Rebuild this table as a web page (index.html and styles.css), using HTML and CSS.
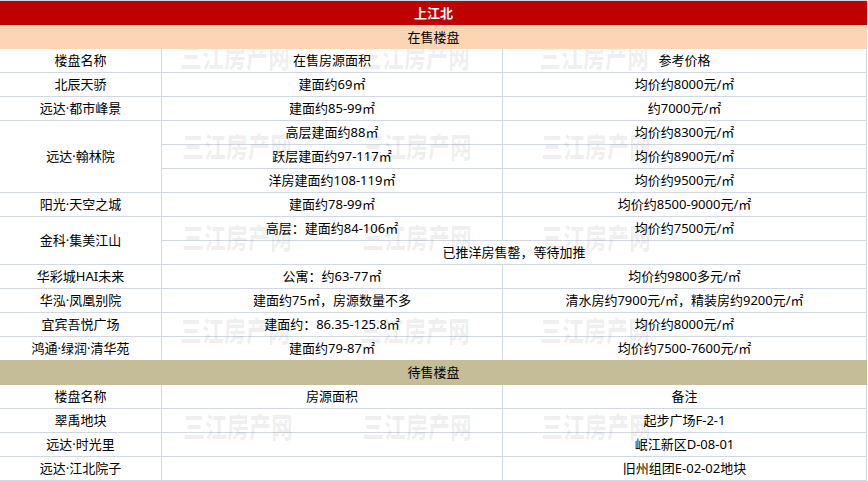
FILE: index.html
```html
<!DOCTYPE html>
<html lang="zh-CN">
<head>
<meta charset="utf-8">
<title>上江北</title>
<link rel="stylesheet" href="styles.css">
</head>
<body>
<div class="sheet">
  <div class="grid">
    <div class="cell band title">上江北</div>
    <div class="cell band onsale">在售楼盘</div>

    <div class="cell">楼盘名称</div><div class="cell">在售房源面积</div><div class="cell">参考价格</div>
    <div class="cell">北辰天骄</div><div class="cell">建面约69㎡</div><div class="cell">均价约8000元/㎡</div>
    <div class="cell">远达·都市峰景</div><div class="cell">建面约85-99㎡</div><div class="cell">约7000元/㎡</div>
    <div class="cell rows3">远达·翰林院</div><div class="cell">高层建面约88㎡</div><div class="cell">均价约8300元/㎡</div>
    <div class="cell">跃层建面约97-117㎡</div><div class="cell">均价约8900元/㎡</div>
    <div class="cell">洋房建面约108-119㎡</div><div class="cell">均价约9500元/㎡</div>
    <div class="cell">阳光·天空之城</div><div class="cell">建面约78-99㎡</div><div class="cell">均价约8500-9000元/㎡</div>
    <div class="cell rows2">金科·集美江山</div><div class="cell">高层：建面约84-106㎡</div><div class="cell">均价约7500元/㎡</div>
    <div class="cell cols2">已推洋房售罄，等待加推</div>
    <div class="cell">华彩城HAI未来</div><div class="cell">公寓：约63-77㎡</div><div class="cell">均价约9800多元/㎡</div>
    <div class="cell">华泓·凤凰别院</div><div class="cell">建面约75㎡，房源数量不多</div><div class="cell">清水房约7900元/㎡，精装房约9200元/㎡</div>
    <div class="cell">宜宾吾悦广场</div><div class="cell">建面约：86.35-125.8㎡</div><div class="cell">均价约8000元/㎡</div>
    <div class="cell">鸿通·绿润·清华苑</div><div class="cell">建面约79-87㎡</div><div class="cell">均价约7500-7600元/㎡</div>

    <div class="cell band pending">待售楼盘</div>

    <div class="cell">楼盘名称</div><div class="cell">房源面积</div><div class="cell">备注</div>
    <div class="cell">翠禹地块</div><div class="cell"></div><div class="cell">起步广场F-2-1</div>
    <div class="cell">远达·时光里</div><div class="cell"></div><div class="cell">岷江新区D-08-01</div>
    <div class="cell">远达·江北院子</div><div class="cell"></div><div class="cell">旧州组团E-02-02地块</div>
  </div>

  <div class="wm" style="left:180px;top:41px">三江房产网</div>
  <div class="wm" style="left:360px;top:41px">三江房产网</div>
  <div class="wm" style="left:539px;top:41px">三江房产网</div>
  <div class="wm" style="left:182px;top:131px">三江房产网</div>
  <div class="wm" style="left:362px;top:131px">三江房产网</div>
  <div class="wm" style="left:541px;top:131px">三江房产网</div>
  <div class="wm" style="left:182px;top:222px">三江房产网</div>
  <div class="wm" style="left:362px;top:222px">三江房产网</div>
  <div class="wm" style="left:541px;top:222px">三江房产网</div>
  <div class="wm" style="left:180px;top:315px">三江房产网</div>
  <div class="wm" style="left:360px;top:315px">三江房产网</div>
  <div class="wm" style="left:540px;top:315px">三江房产网</div>
  <div class="wm" style="left:183px;top:411px">三江房产网</div>
  <div class="wm" style="left:362px;top:411px">三江房产网</div>
  <div class="wm" style="left:541px;top:411px">三江房产网</div>
</div>
</body>
</html>
```

FILE: styles.css
```css
html, body {
  margin: 0;
  padding: 0;
  background: #ffffff;
}

body {
  font-family: "Noto Sans", "Noto Sans CJK SC", sans-serif;
  font-size: 13px;
  color: #000000;
}

.sheet {
  position: relative;
  width: 868px;
  height: 481px;
  overflow: hidden;
}

.grid {
  display: grid;
  width: 867px;
  box-sizing: border-box;
  grid-template-columns: 161px 340px 363px;
  grid-auto-rows: 23px;
  gap: 1px;
  padding: 1px 1px 1px 0;
  background: #d0d7e5;
}

.cell {
  background: #ffffff;
  display: flex;
  align-items: center;
  justify-content: center;
  white-space: nowrap;
  line-height: 1;
}

.rows3 { grid-row: span 3; }
.rows2 { grid-row: span 2; }
.cols2 { grid-column: span 2; }

.band {
  grid-column: 1 / -1;
  z-index: 2;
  margin-right: -1px;
}

.title {
  background: #c00000;
  color: #ffffff;
  font-weight: 700;
  margin-bottom: -1px;
}

.onsale {
  background: #fcd5b4;
  margin-bottom: -1px;
}

.pending {
  background: #c4bd97;
  margin-top: -1px;
  margin-bottom: -1px;
}

.wm {
  position: absolute;
  z-index: 1;
  font-family: "Noto Sans CJK SC", sans-serif;
  font-size: 22px;
  font-weight: 900;
  line-height: 22px;
  color: rgba(0, 0, 0, 0.06);
  white-space: nowrap;
  transform: scaleY(1.3);
  transform-origin: top left;
  pointer-events: none;
}
```
